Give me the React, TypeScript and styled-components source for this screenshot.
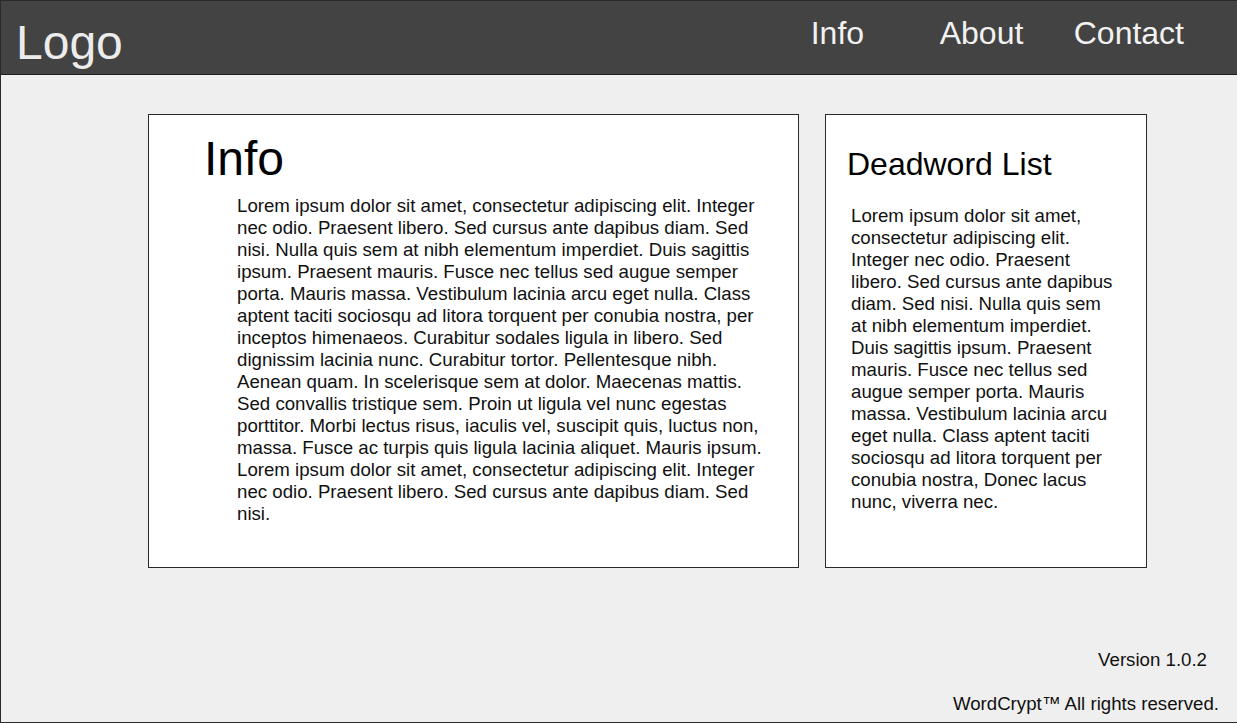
import React from "react";
import styled, { createGlobalStyle } from "styled-components";

const GlobalStyle = createGlobalStyle`
  html, body {
    margin: 0;
    padding: 0;
    background: #efefef;
    overflow: hidden;
  }
  * { box-sizing: border-box; }
  body {
    font-family: "Liberation Sans", Arial, sans-serif;
  }
`;

const Page = styled.div`
  width: 1237px;
  height: 723px;
  display: flex;
  flex-direction: column;
  background: #efefef;
  border: 1px solid #2a2a2a;
  border-right: none;
`;

const Header = styled.header`
  height: 74px;
  flex: none;
  display: flex;
  align-items: flex-start;
  justify-content: space-between;
  background: #434343;
  border-bottom: 1px solid #1e1e1e;
  padding-left: 15px;
`;

const Logo = styled.div`
  margin-top: 14px;
  font-size: 48px;
  line-height: 56px;
  color: #ececec;
`;

const Nav = styled.nav`
  display: flex;
  margin-top: 13px;
  margin-right: 53px;
`;

const NavItem = styled.a<{ $w?: number }>`
  width: ${(p) => (p.$w ? `${p.$w}px` : "auto")};
  font-size: 32px;
  line-height: 38px;
  color: #f2f2f2;
  text-decoration: none;
  white-space: nowrap;
`;

const Main = styled.main`
  flex: 1;
  display: flex;
  flex-direction: column;
  padding: 39px 0 0 147px;
`;

const Cards = styled.div`
  display: flex;
  gap: 26px;
`;

const Card = styled.section<{ $w: number }>`
  width: ${(p) => p.$w}px;
  height: 454px;
  background: #ffffff;
  border: 1px solid #2a2a2a;
`;

const InfoTitle = styled.h1`
  margin: 16px 0 0 55px;
  font-size: 48px;
  line-height: 56px;
  font-weight: 400;
  color: #000;
`;

const SideTitle = styled.h2`
  margin: 30px 0 0 21px;
  font-size: 32px;
  line-height: 38px;
  font-weight: 400;
  color: #000;
`;

const Body = styled.p<{ $left: number; $top: number }>`
  margin: ${(p) => p.$top}px 0 0 ${(p) => p.$left}px;
  font-size: 18.67px;
  line-height: 22px;
  color: #111;
  white-space: nowrap;
`;

const Line = styled.span`
  display: block;
`;

const Footer = styled.footer`
  margin-top: auto;
  display: flex;
  flex-direction: column;
  align-items: flex-end;
  gap: 22px;
  padding-bottom: 7px;
`;

const FooterLine = styled.div<{ $right: number }>`
  font-size: 18.67px;
  line-height: 22px;
  color: #111;
  margin-right: ${(p) => p.$right}px;
`;

const infoLines = [
  "Lorem ipsum dolor sit amet, consectetur adipiscing elit. Integer",
  "nec odio. Praesent libero. Sed cursus ante dapibus diam. Sed",
  "nisi. Nulla quis sem at nibh elementum imperdiet. Duis sagittis",
  "ipsum. Praesent mauris. Fusce nec tellus sed augue semper",
  "porta. Mauris massa. Vestibulum lacinia arcu eget nulla. Class",
  "aptent taciti sociosqu ad litora torquent per conubia nostra, per",
  "inceptos himenaeos. Curabitur sodales ligula in libero. Sed",
  "dignissim lacinia nunc. Curabitur tortor. Pellentesque nibh.",
  "Aenean quam. In scelerisque sem at dolor. Maecenas mattis.",
  "Sed convallis tristique sem. Proin ut ligula vel nunc egestas",
  "porttitor. Morbi lectus risus, iaculis vel, suscipit quis, luctus non,",
  "massa. Fusce ac turpis quis ligula lacinia aliquet. Mauris ipsum.",
  "Lorem ipsum dolor sit amet, consectetur adipiscing elit. Integer",
  "nec odio. Praesent libero. Sed cursus ante dapibus diam. Sed",
  "nisi.",
];

const sideLines = [
  "Lorem ipsum dolor sit amet,",
  "consectetur adipiscing elit.",
  "Integer nec odio. Praesent",
  "libero. Sed cursus ante dapibus",
  "diam. Sed nisi. Nulla quis sem",
  "at nibh elementum imperdiet.",
  "Duis sagittis ipsum. Praesent",
  "mauris. Fusce nec tellus sed",
  "augue semper porta. Mauris",
  "massa. Vestibulum lacinia arcu",
  "eget nulla. Class aptent taciti",
  "sociosqu ad litora torquent per",
  "conubia nostra, Donec lacus",
  "nunc, viverra nec.",
];

export default function App() {
  return (
    <>
      <GlobalStyle />
      <Page>
        <Header>
          <Logo>Logo</Logo>
          <Nav>
            <NavItem $w={129}>Info</NavItem>
            <NavItem $w={134}>About</NavItem>
            <NavItem>Contact</NavItem>
          </Nav>
        </Header>
        <Main>
          <Cards>
            <Card $w={651}>
              <InfoTitle>Info</InfoTitle>
              <Body $left={88} $top={8}>
                {infoLines.map((l, i) => (
                  <Line key={i}>{l}</Line>
                ))}
              </Body>
            </Card>
            <Card $w={322}>
              <SideTitle>Deadword List</SideTitle>
              <Body $left={25} $top={22}>
                {sideLines.map((l, i) => (
                  <Line key={i}>{l}</Line>
                ))}
              </Body>
            </Card>
          </Cards>
          <Footer>
            <FooterLine $right={30}>Version 1.0.2</FooterLine>
            <FooterLine $right={18}>WordCrypt™ All rights reserved.</FooterLine>
          </Footer>
        </Main>
      </Page>
    </>
  );
}
